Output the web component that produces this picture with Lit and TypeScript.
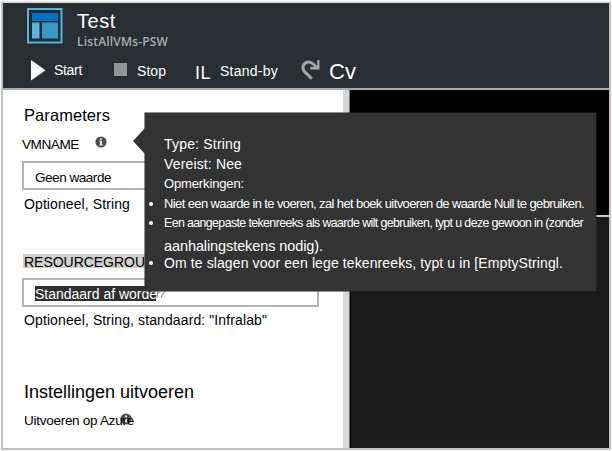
import { LitElement, html, css, svg } from "lit";
import { customElement, property } from "lit/decorators.js";

/** A single line of text, tracked so that it fills the given width. */
@customElement("text-run")
export class TextRun extends LitElement {
  static styles = css`
    :host { display: block; line-height: 20px; height: 20px; white-space: pre; flex: none; }
  `;
  @property({ type: Number }) width = 0;
  @property() text = "";

  protected render() {
    return html`<span>${this.text}</span>`;
  }

  protected firstUpdated() {
    const span = this.renderRoot.querySelector("span")!;
    const natural = span.getBoundingClientRect().width;
    if (this.width && natural) {
      span.style.letterSpacing = (this.width - natural) / this.text.length + "px";
    }
  }
}

@customElement("info-icon")
export class InfoIcon extends LitElement {
  static styles = css`
    :host { display: block; width: 12px; height: 12px; }
    svg { display: block; }
  `;
  protected render() {
    return html`<svg width="12" height="12" viewBox="0 0 12 12">
      <circle cx="6" cy="6" r="5.6" fill="#494d52" />
      <path d="M5 2.4h2v1.5H5z M4.3 4.8H7v3.7h.8v1H4.3v-1H5V5.8h-.7z" fill="#e4e6e8" />
    </svg>`;
  }
}

@customElement("tool-tip")
export class ToolTip extends LitElement {
  static styles = css`
    :host { display: block; box-sizing: border-box; width: 451px; height: 178px; background: #333; color: #fff;
      padding: 21px 0 0 19px; font-size: 14px; box-shadow: 0 0 0 0.5px #222; }
    .lines { display: grid; grid-template-rows: 20px 20px 20px 19px 23px 17px 20px; }
    .bullet { position: relative; }
    .bullet::before { content: ""; position: absolute; left: -15px; top: 8px; width: 4px; height: 4px; border-radius: 50%; background: #fff; }
    .small { font-size: 13px; }
    .tight { font-size: 12.4px; }
    .wide { font-size: 14.5px; }
    .arrow { position: absolute; left: -12px; top: 15px; width: 12px; height: 26px; background: #333;
      clip-path: polygon(100% 0, 0 50%, 100% 100%); }
  `;
  protected render() {
    return html`<div class="arrow"></div>
      <div class="lines">
        <text-run text="Type: String" width="77"></text-run>
        <text-run text="Vereist: Nee" width="78"></text-run>
        <text-run class="small" text="Opmerkingen:" width="80"></text-run>
        <text-run class="small bullet" text="Niet een waarde in te voeren, zal het boek uitvoeren de waarde Null te gebruiken." width="420"></text-run>
        <text-run class="tight bullet" text="Een aangepaste tekenreeks als waarde wilt gebruiken, typt u deze gewoon in (zonder" width="419"></text-run>
        <text-run class="wide" text="aanhalingstekens nodig)." width="159"></text-run>
        <text-run class="bullet" text="Om te slagen voor een lege tekenreeks, typt u in [EmptyStringl." width="399"></text-run>
      </div>`;
  }
}

@customElement("app-root")
export class AppRoot extends LitElement {
  static styles = css`
    :host { display: block; position: relative; box-sizing: border-box; width: 612px; height: 451px; overflow: hidden;
      padding: 1px 1px 1px 1px; background: #fff; color: #000; font-family: "Liberation Sans", Arial, sans-serif; font-size: 14px; }
    .frame { box-sizing: border-box; width: 610px; height: 449px; border: 2px solid #c1c1c1; border-top-color: #dedede; border-right-color: #c4c0c0;
      display: flex; flex-direction: column; }
    header { height: 85px; flex: none; background: #292e32; color: #fff; border-bottom: 2px solid #a9abac; }
    .title { display: flex; height: 52px; padding: 5px 0 0 24px; box-sizing: border-box; }
    .names { padding: 2px 0 0 14px; }
    .h { font-size: 20px; height: 23px; line-height: 22px; }
    .sub { font-family: "Open Sans", "Noto Sans", sans-serif; font-weight: 600; font-size: 12px; height: 18px; line-height: 18px; color: #a9adaf; }
    .tools { display: flex; align-items: flex-start; padding-left: 28px; }
    .play { margin-top: 5px; }
    .stop { width: 13px; height: 13px; background: #929698; margin: 8px 0 0 32px; }
    .start-label { margin: 5px 0 0 8px; }
    .stop-label { margin: 6px 0 0 10px; width: 30px; }
    .il { font-size: 18px; margin: 8px 0 0 28px; width: 16px; }
    .standby { margin: 6px 0 0 9px; width: 57px; }
    .redo { margin: 5px 0 0 24px; }
    .cv { font-size: 22px; margin: 7px 0 0 8px; }

    .body { flex: 1; display: flex; }
    .form { box-sizing: border-box; width: 340px; flex: none; background: #fff; padding: 15px 0 0 19px; display: flex; flex-direction: column; }
    .divider { width: 6px; flex: none; background: #d5d8da; border-right: 1px solid #777; }
    .console { flex: 1; display: flex; flex-direction: column; background: #1a1a1a; border-left: 1px solid #000; }
    .output { height: 125px; background: #000; border-bottom: 2px solid #ccc; }
    .in { margin-left: 2px; }
    .params { font-size: 16.5px; }
    .label { display: flex; margin-top: 10px; }
    .label info-icon { margin: 1px 0 0 15px; }
    .label text-run { width: 58px; font-size: 13.6px; }
    .field { box-sizing: border-box; width: 297px; height: 29px; border: 2px solid #b4b4b4; margin-top: 6px; padding: 5px 0 0 11px; }
    .geen { font-size: 13.5px; }
    .hint { margin-top: 4px; }
    .group { display: flex; margin: 40px 0 0 1px; background: #d0d0d0; width: 140px; height: 14px; padding-left: 1px; }
    .group text-run { margin-top: -2px; }
    .field.second { margin-top: 10px; padding-top: 6px; display: flex; }
    .picked { width: 121px; height: 15px; background: #303030; color: #fff; }
    .picked text-run { margin-top: -2px; }
    .stray { color: #777; font-style: italic; font-size: 11px; margin-top: -2px; }
    .second + .hint { margin-top: 3px; }
    .settings { font-size: 18px; margin-top: 52px; }
    .azure { display: flex; position: relative; margin-top: 9px; font-size: 13.5px; }
    .azure info-icon { position: absolute; left: 96px; top: 2px; z-index: -1; }
    .azure { z-index: 0; }
    tool-tip { position: absolute; left: 145px; top: 113px; z-index: 1; }
  `;

  private logo() {
    return svg`<svg width="36" height="36" viewBox="0 0 36 36">
      <rect x="1" y="1" width="33.5" height="33.5" fill="#1d2c35" stroke="#59b4d9" stroke-width="2" />
      <rect x="5" y="5" width="26" height="8" fill="#0072c6" />
      <rect x="5" y="14.5" width="7.5" height="16" fill="#59b4d9" />
      <rect x="15" y="14.5" width="16" height="16" fill="#3999c6" />
    </svg>`;
  }

  protected render() {
    return html`
      <div class="frame">
        <header>
          <div class="title">
            ${this.logo()}
            <div class="names">
              <text-run class="h" text="Test" width="39"></text-run>
              <text-run class="sub" text="ListAllVMs-PSW" width="91"></text-run>
            </div>
          </div>
          <div class="tools">
            <svg class="play" width="15" height="21" viewBox="0 0 15 21"><path d="M0 0L14.5 10.3L0 20.6z" fill="#fff" /></svg>
            <text-run class="start-label" text="Start" width="28"></text-run>
            <div class="stop"></div>
            <text-run class="stop-label" text="Stop" width="29"></text-run>
            <text-run class="il" text="IL" width="16"></text-run>
            <text-run class="standby" text="Stand-by" width="58"></text-run>
            <svg class="redo" width="20" height="20" viewBox="0 0 20 20">
              <path d="M10.800 18.600L4 12.200C.2 8 2.200 2.200 7.600 2.100C11 2 12.600 4.200 15 7" fill="none" stroke="#a3a6a8" stroke-width="3" />
              <path d="M18.500 0v9.600H9.200V7.100h4.800L16.200 5V0z" fill="#a3a6a8" />
            </svg>
            <text-run class="cv" text="Cv" width="27"></text-run>
          </div>
        </header>
        <div class="body">
          <div class="form">
            <text-run class="in params" text="Parameters" width="86"></text-run>
            <div class="label"><text-run text="VMNAME" width="57"></text-run><info-icon></info-icon></div>
            <div class="field"><text-run class="geen" text="Geen waarde" width="76"></text-run></div>
            <text-run class="in hint" text="Optioneel, String" width="106"></text-run>
            <div class="group"><text-run text="RESOURCEGROU" width="121"></text-run></div>
            <div class="field second">
              <div class="picked"><text-run text="Standaard af worde" width="122"></text-run></div>
              <text-run class="stray" text="r7" width="9"></text-run>
            </div>
            <text-run class="in hint" text='Optioneel, String, standaard: "Infralab"' width="243"></text-run>
            <text-run class="in settings" text="Instellingen uitvoeren" width="170"></text-run>
            <div class="in azure"><text-run text="Uitvoeren op Azure" width="110"></text-run><info-icon></info-icon></div>
          </div>
          <div class="divider"></div>
          <div class="console"><div class="output"></div></div>
        </div>
      </div>
      <tool-tip></tool-tip>
    `;
  }
}
